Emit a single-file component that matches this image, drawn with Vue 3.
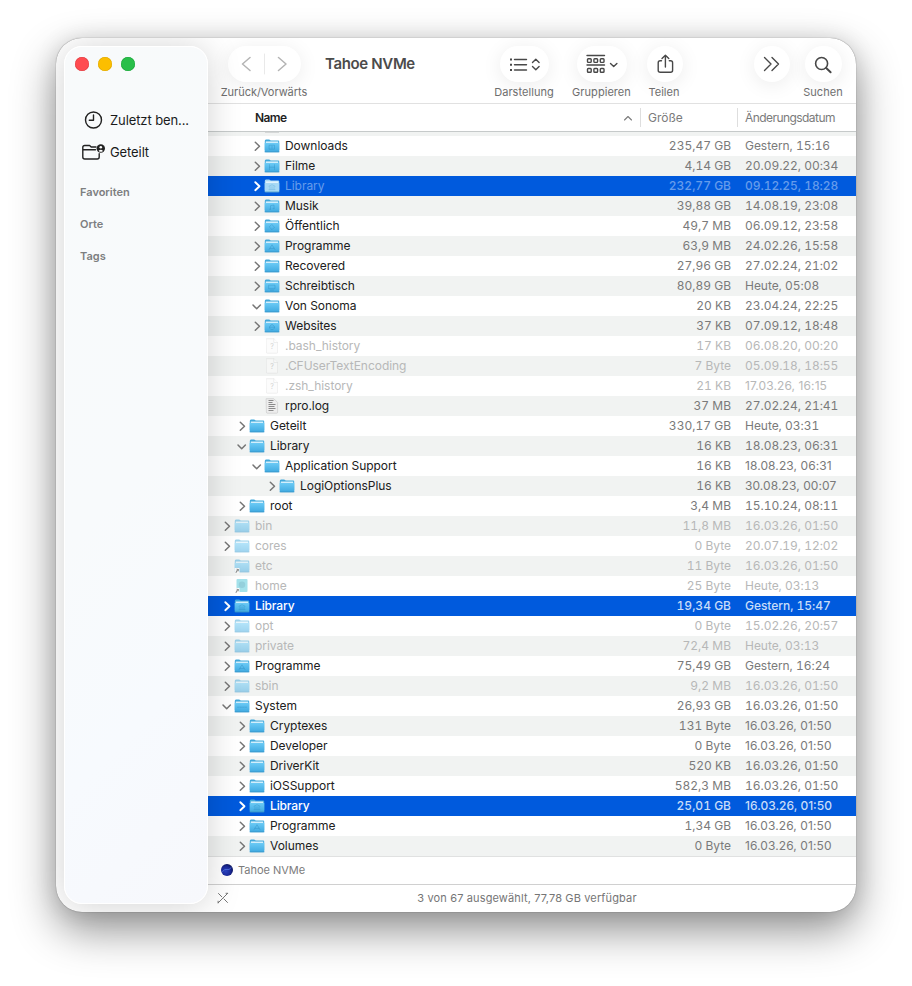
<script setup>
const raw = `
2|r|downloads|Downloads|235,47 GB|Gestern, 15:16
2|r|film|Filme|4,14 GB|20.09.22, 00:34
2|r|library|Library|232,77 GB|09.12.25, 18:28|sel dim
2|r|music|Musik|39,88 GB|14.08.19, 23:08
2|r|public|Öffentlich|49,7 MB|06.09.12, 23:58
2|r|apps|Programme|63,9 MB|24.02.26, 15:58
2|r|plain|Recovered|27,96 GB|27.02.24, 21:02
2|r|desktop|Schreibtisch|80,89 GB|Heute, 05:08
2|d|plain|Von Sonoma|20 KB|23.04.24, 22:25
2|r|sites|Websites|37 KB|07.09.12, 18:48
2|n|unknown|.bash_history|17 KB|06.08.20, 00:20|dim
2|n|unknown|.CFUserTextEncoding|7 Byte|05.09.18, 18:55|dim
2|n|unknown|.zsh_history|21 KB|17.03.26, 16:15|dim tight
2|n|log|rpro.log|37 MB|27.02.24, 21:41
1|r|plain|Geteilt|330,17 GB|Heute, 03:31
1|d|plain|Library|16 KB|18.08.23, 06:31
2|d|plain|Application Support|16 KB|18.08.23, 06:31|tight
3|r|plain|LogiOptionsPlus|16 KB|30.08.23, 00:07|tight
1|r|plain|root|3,4 MB|15.10.24, 08:11
0|r|plain|bin|11,8 MB|16.03.26, 01:50|dim
0|r|plain|cores|0 Byte|20.07.19, 12:02|dim
0|n|alias|etc|11 Byte|16.03.26, 01:50|dim
0|n|home|home|25 Byte|Heute, 03:13|dim
0|r|library|Library|19,34 GB|Gestern, 15:47|sel
0|r|plain|opt|0 Byte|15.02.26, 20:57|dim
0|r|plain|private|72,4 MB|Heute, 03:13|dim
0|r|apps|Programme|75,49 GB|Gestern, 16:24
0|r|plain|sbin|9,2 MB|16.03.26, 01:50|dim
0|d|system|System|26,93 GB|16.03.26, 01:50
1|r|plain|Cryptexes|131 Byte|16.03.26, 01:50|tight
1|r|plain|Developer|0 Byte|16.03.26, 01:50|tight
1|r|plain|DriverKit|520 KB|16.03.26, 01:50
1|r|plain|iOSSupport|582,3 MB|16.03.26, 01:50
1|r|library|Library|25,01 GB|16.03.26, 01:50|sel tight
1|r|apps|Programme|1,34 GB|16.03.26, 01:50|tight
1|r|plain|Volumes|0 Byte|16.03.26, 01:50|tight`
const rows = raw.trim().split('\n').map((line) => {
  const [level, arrow, icon, name, size, date, state = ''] = line.split('|')
  return { level, arrow, icon, name, size, date, state }
})
const glyphs = {
  downloads: 'M5 6h5v4h-5zM7.5 7v2',
  film: 'M5 5.5v5M10 5.5v5M5 8h5',
  library: 'M4.5 10.5h6M5.5 10V7.5M7.5 10V7.5M9.5 10V7.5M4.5 7l3-1.5 3 1.5',
  music: 'M6 10V6.5l3.500-.7v3.500M5 10h1M8.500 9.500h1',
  public: 'M7.500 5.500l2.500 2.500-2.500 2.500L5 8z',
  apps: 'M4.500 10.500l3-5 3 5M5.500 9.200h4',
  desktop: 'M4.500 6h6v3.500h-6zM6 11h3',
  sites: 'M7.500 5.500a2.500 2.500 0 1 0 .01 0M5 8h5',
  system: 'M3 8h1.500M5.500 8H7M8 8h1.500M10.500 8H12',
}
</script>

<template>
  <div class="desktop">
    <svg class="defs" width="0" height="0" aria-hidden="true">
      <defs>
        <linearGradient id="folderFill" x1="0" y1="0" x2="0" y2="1">
          <stop offset="0" stop-color="#6ccbf6" />
          <stop offset="1" stop-color="#3fa9e0" />
        </linearGradient>
        <radialGradient id="diskFill" cx=".4" cy=".6" r=".75">
          <stop offset="0" stop-color="#2a43c4" />
          <stop offset=".5" stop-color="#1b2a9c" />
          <stop offset="1" stop-color="#060a3c" />
        </radialGradient>
      </defs>
    </svg>
    <div class="window">
      <aside class="sidebar">
        <div class="lights"><i class="red"></i><i class="yellow"></i><i class="green"></i></div>
        <nav>
          <div class="place">
            <svg width="24" height="20" viewBox="0 0 24 20"><circle cx="11.500" cy="10" r="8" /><path d="M11.500 5v5.300H7.300" /></svg>
            <span>Zuletzt ben...</span>
          </div>
          <div class="place">
            <svg width="24" height="20" viewBox="0 0 24 20"><path d="M14 5H9.200L7.600 3.500H2.700Q.8 3.500.8 5.300V15q0 2 2 2h12.400q2 0 2-2v-3.300M.8 7.800h12.700" /><circle class="solid" cx="18.800" cy="6.500" r="4.200" /><circle class="hole" cx="18.800" cy="5.200" r="1.300" /><path class="hole" d="M16.600 9q2.200-2.500 4.400 0-2.200 1.700-4.400 0" /></svg>
            <span>Geteilt</span>
          </div>
        </nav>
        <h4>Favoriten</h4>
        <h4>Orte</h4>
        <h4>Tags</h4>
      </aside>

      <main>
        <header class="toolbar">
          <div class="tool nav">
            <div class="pill">
              <svg width="73" height="36" viewBox="0 0 73 36" class="muted"><path d="M22 11.500l-7.500 6.500 7.500 6.500M50.500 11.500l7.500 6.500-7.500 6.500" /><path class="split" d="M36.500 8v20" /></svg>
            </div>
            <label>Zurück/Vorwärts</label>
          </div>
          <h1>Tahoe NVMe</h1>
          <div class="tool view">
            <div class="pill">
              <svg width="49" height="36" viewBox="0 0 49 36"><path d="M14.500 13.500h12M14.500 18.700h12M14.500 24h12" /><path class="dots" d="M10 13.500h2M10 18.700h2M10 24h2" /><path d="M32.500 16.500l3.300-3.300 3.300 3.300M32.500 20.500l3.300 3.300 3.300-3.300" /></svg>
            </div>
            <label>Darstellung</label>
          </div>
          <div class="tool group">
            <div class="pill">
              <svg width="50" height="36" viewBox="0 0 50 36"><path d="M10 9.500h17.500M10 19h17.500" /><rect x="10.500" y="12.700" width="3.700" height="3.700" rx=".8" /><rect x="16.900" y="12.700" width="3.700" height="3.700" rx=".8" /><rect x="23.300" y="12.700" width="3.700" height="3.700" rx=".8" /><rect x="10.500" y="22.500" width="3.700" height="3.700" rx=".8" /><rect x="16.900" y="22.500" width="3.700" height="3.700" rx=".8" /><rect x="23.300" y="22.500" width="3.700" height="3.700" rx=".8" /><path d="M33.500 17.500l3.200 3 3.200-3" /></svg>
            </div>
            <label>Gruppieren</label>
          </div>
          <div class="tool share">
            <div class="pill">
              <svg width="36" height="36" viewBox="0 0 36 36"><path d="M14.500 14.800h-1.300q-2 0-2 2v7.500q0 2 2 2h10.400q2 0 2-2v-7.500q0-2-2-2h-1.300M18.400 21V9.500M15 12.500l3.400-3.300 3.400 3.300" /></svg>
            </div>
            <label>Teilen</label>
          </div>
          <div class="tool more">
            <div class="pill">
              <svg width="36" height="36" viewBox="0 0 36 36"><path d="M10.500 11.500l6.500 6.500-6.500 6.500M18 11.500l6.500 6.500-6.500 6.500" /></svg>
            </div>
          </div>
          <div class="tool search">
            <div class="pill">
              <svg width="37" height="36" viewBox="0 0 37 36"><circle class="lens" cx="16.600" cy="17.500" r="6" /><path class="handle" d="M21.200 22l4.400 4.200" /></svg>
            </div>
            <label>Suchen</label>
          </div>
        </header>

        <div class="columns">
          <b>Name</b>
          <svg width="10" height="8" viewBox="0 0 10 8"><path d="M1.500 6L5 2.500 8.500 6" /></svg>
          <span class="h-size">Größe</span>
          <span class="h-date">Änderungsdatum</span>
        </div>
        <div class="peek"><i></i></div>

        <div class="list">
          <div v-for="(row, i) in rows" :key="i" class="row" :class="row.state">
            <div class="name" :class="'l' + row.level">
              <svg class="arrow" width="12" height="14" viewBox="0 0 12 14">
                <path v-if="row.arrow === 'r'" d="M4.300 3.200l4.200 4-4.200 4" />
                <path v-if="row.arrow === 'd'" d="M2 6L5.700 9.800 9.400 6" />
              </svg>
              <svg class="icon" width="16" height="16" viewBox="0 0 16 16">
                <g v-if="row.icon === 'unknown' || row.icon === 'log'">
                  <path class="page" :class="row.icon" d="M2.500.7h7.300L13.600 4.500v9.800q0 .9-.9.900H3.300q-.9 0-.9-.9z" />
                  <path v-if="row.icon !== 'log'" class="fold" d="M9.800.7v3.800h3.800" />
                  <path v-if="row.icon === 'log'" class="lines" d="M4.500 2.500h5M4.500 4.500h4M4.500 6.500h7M4.500 8.500h6M4.500 10.500h7M4.500 12.500h5" />
                  <text v-else class="mark" x="8" y="11" text-anchor="middle">?</text>
                </g>
                <g v-else-if="row.icon === 'home'">
                  <rect class="drive" x="2.500" y="1" width="11" height="13" rx="1" />
                  <circle class="globe" cx="8" cy="6.800" r="3.200" />
                  <path class="badge" d="M.5 10h5v5.500h-5z" /><path class="hook" d="M2 14.500q0-2.500 2.300-2.800M3 11.300l1.500.3-.5 1.500" />
                </g>
                <g v-else>
                  <path class="back" d="M.8 3Q.8 1.500 2 1.500h3.200L6.800 2.600h7.400q1 0 1 1V12H.8z" />
                  <path class="paper" d="M1.800 3.600h12.400v2H1.800z" />
                  <rect class="front" x=".7" y="4.700" width="14.600" height="9.500" rx=".9" />
                  <path class="base" d="M1 13.900h14" />
                  <path v-if="glyphs[row.icon]" class="emblem" transform="translate(.5 1.200)" :d="glyphs[row.icon]" />
                  <g v-if="row.icon === 'alias'"><path class="badge" d="M.5 10h5v5.500h-5z" /><path class="hook" d="M2 14.500q0-2.500 2.300-2.800M3 11.300l1.500.3-.5 1.500" /></g>
                </g>
              </svg>
              <span class="title">{{ row.name }}</span>
            </div>
            <span class="size">{{ row.size }}</span>
            <span class="date">{{ row.date }}</span>
          </div>
        </div>

        <div class="path">
          <svg width="12" height="12" viewBox="0 0 12 12"><circle cx="6" cy="6" r="6" fill="url(#diskFill)" /><path d="M1.500 7.500Q4 4.500 6 5.500t4.300-2" fill="none" stroke="#4f70dc" stroke-width=".9" /></svg>
          <span>Tahoe NVMe</span>
        </div>
        <footer>
          <svg width="12" height="12" viewBox="0 0 12 12"><path d="M1.500 1.500l3.300 3.300M7 7l3.500 3.500M1.200 10.800L10.600 1.400M9 1.300h1.700M1.100 9.200v1.700" /></svg>
          <span>3 von 67 ausgewählt, 77,78 GB verfügbar</span>
        </footer>
      </main>
    </div>
  </div>
</template>

<style>
body { margin: 0; background: #fff; }
</style>

<style scoped>
* { box-sizing: border-box; }
.desktop { display: flex; align-items: flex-start; width: 912px; height: 986px; padding: 38px 56px; overflow: hidden; background: #fff; font-family: Inter, "Liberation Sans", sans-serif; }
svg { display: block; flex: none; fill: none; stroke: #484848; stroke-width: 1.4; stroke-linecap: round; stroke-linejoin: round; }
.window { display: flex; width: 800px; height: 874px; border-radius: 26px; overflow: hidden; background: #fff; box-shadow: 0 0 1px rgba(0, 0, 0, 0.6), 0 18px 44px rgba(0, 0, 0, 0.44), 0 0 22px rgba(0, 0, 0, 0.1); }
.sidebar { position: relative; z-index: 1; flex: none; width: 144px; height: 858px; margin: 8px 0 0 8px; border-radius: 18px; border: 1.5px solid #fff; background: linear-gradient(135deg, #f8fafb 0%, #f8fafc 50%, #f7fafe 75%, #f7f8fc 100%); box-shadow: 0 2px 34px rgba(0, 0, 0, 0.18); }
.lights { display: flex; gap: 9px; padding: 9.500px 0 0 9.500px; }
.lights i { width: 14px; height: 14px; border-radius: 50%; }
.red { background: #ff4b50; box-shadow: inset 0 0 0 0.5px #dc3f43; }
.yellow { background: #fcbe00; box-shadow: inset 0 0 0 0.5px #dda800; }
.green { background: #29bf4a; box-shadow: inset 0 0 0 0.5px #1ba43a; }
nav { padding: 33px 0 0 17px; }
.place { display: flex; align-items: center; gap: 4px; height: 32px; font-size: 13px; color: #191a1b; white-space: nowrap; letter-spacing: -0.1px; }
.place svg { stroke: #222; }
.place .solid { fill: #222; stroke: none; }
.place .hole { fill: #fff; stroke: none; }
h4 { margin: 0; padding-left: 15px; height: 32px; font-size: 11px; line-height: 16px; font-weight: 600; color: #7d7e80; }
nav + h4 { margin-top: 16px; }
main { display: flex; flex-direction: column; flex: 1; min-width: 0; }
.toolbar { display: flex; height: 66px; padding-top: 8px; flex: none; border-bottom: 1px solid #e1e1e1; }
.tool { display: flex; flex-direction: column; align-items: center; gap: 3px; flex: none; }
.pill { height: 36px; border-radius: 18px; background: #fff; box-shadow: 0 3px 20px rgba(0, 0, 0, 0.08); }
.tool label { font-size: 11px; line-height: 14px; color: #6e6e6e; white-space: nowrap; letter-spacing: 0.05px; }
.nav { width: 88px; margin-left: 12px; }
.nav label { letter-spacing: -0.03px; }
.muted { stroke: #b4b4b4; stroke-width: 1.5; }
.split { stroke: #e9e9e9; stroke-width: 1; }
h1 { width: 168px; margin: 0 0 0 17px; font-size: 15px; line-height: 36px; font-weight: 600; letter-spacing: -0.35px; color: #4b4b4b; }
.view { width: 62px; }
.group { width: 60px; margin-left: 16.500px; }
.share { width: 36px; margin-left: 15.500px; }
.share label { margin-left: -2px; }
.more { width: 36px; margin-left: 71px; }
.search { width: 40px; margin-left: 13px; }
.dots { stroke-width: 2; stroke-linecap: butt; }
.lens { stroke-width: 1.6; }
.handle { stroke-width: 2; }
.columns { display: flex; align-items: center; flex: none; height: 28px; padding-left: 47px; border-bottom: 1px solid #c6caca; font-size: 12px; color: #7b7b7b; }
.columns b { flex: 1; font-weight: 600; letter-spacing: -0.65px; padding-bottom: 1px; color: #1f1f1f; }
.columns b { letter-spacing: -0.6px; }
.columns svg { margin-right: 7px; stroke: #7b7b7b; stroke-width: 1.1; }
.columns span { height: 19px; line-height: 19px; border-left: 1px solid #dedede; padding-left: 7px; }
.columns .h-size { width: 97px; }
.columns .h-date { width: 119px; letter-spacing: -0.56px; }
.peek { flex: none; height: 4px; padding-left: 57px; background: #f1f3f2; }
.peek i { display: block; width: 14px; height: 1px; background: #d5d7d7; }
.list { flex: none; }
.row { display: flex; align-items: center; height: 20px; font-size: 12px; color: #7a7a7a; }
.row:nth-child(even) { background: #f1f3f2; }
.name { display: flex; align-items: center; width: 400px; flex: none; color: #202020; }
.title { white-space: pre; margin-left: 5px; letter-spacing: -0.04px; }
.title, .size, .date { line-height: 18px; }
.l0 { padding-left: 13px; }
.l1 { padding-left: 28px; }
.l2 { padding-left: 43px; }
.l3 { padding-left: 58px; }
.arrow { stroke: #767676; stroke-width: 1.5; }
.icon { margin-left: 1px; }
.size { width: 123px; text-align: right; font-variant-numeric: tabular-nums; }
.date { margin-left: 14px; font-variant-numeric: tabular-nums; white-space: nowrap; letter-spacing: -0.04px; }
.tight .date { font-variant-numeric: normal; letter-spacing: 0.09px; }
.row.dim, .row.dim .title { color: #b7b8b8; }
.row.dim .icon { opacity: 0.5; }
.row.sel { background: #005add; color: #c9ddf8; }
.row.sel .title { color: #fff; font-weight: 500; letter-spacing: -0.12px; }
.row.sel.dim, .row.sel.dim .title { color: #669ceb; }
.row.sel.dim .title { font-weight: 400; letter-spacing: -0.04px; }
.row.sel .size, .row.sel .date { font-weight: 500; }
.row.sel.tight .date { letter-spacing: 0; }
.row.sel .arrow { stroke: #fff; stroke-width: 1.9; }
.row.sel.dim .icon { opacity: 1; }
.row.sel.dim .front, .row.sel.dim .back { fill: #a7d9f5; }
.row.sel.dim .emblem { opacity: 0.3; }
.icon path, .icon rect, .icon circle { stroke: none; }
.back { fill: #41a9db; }
.paper { fill: #f4fbff; }
.front { fill: url(#folderFill); }
.icon .base { stroke: #368fc0; stroke-width: 0.6; }
.icon .emblem { stroke: #2f8fc4; stroke-width: 0.8; opacity: 0.5; }
.icon .page { fill: #fbfbfb; stroke: #d0d0d0; stroke-width: 0.6; }
.icon .page.log { fill: #ededed; stroke: #c6c6c6; }
.icon .fold { fill: #fff; stroke: #c9c9c9; stroke-width: 0.6; }
.icon .lines { fill: none; stroke: #8a8a8a; stroke-width: 1; stroke-linecap: butt; }
.mark { fill: #a8a8a8; stroke: none; font-size: 7px; }
.drive { fill: #4bc6d8; }
.globe { fill: #2ba2bb; }
.badge { fill: #fff; }
.icon .hook { stroke: #222; stroke-width: 1; }
.path { display: flex; align-items: center; gap: 5px; flex: none; height: 29px; padding-left: 13px; padding-bottom: 1px; border-top: 1px solid #e0e1e1; border-bottom: 1px solid #d0d0d0; font-size: 11px; color: #7c7c7c; letter-spacing: -0.02px; }
.path svg { stroke: none; }
footer { display: flex; align-items: center; flex: 1; padding: 0 0 1px 9px; font-size: 11px; color: #757575; }
footer svg { stroke: #777; stroke-width: 1; }
footer span { flex: 1; text-align: center; padding-right: 31px; letter-spacing: 0.14px; }
</style>
